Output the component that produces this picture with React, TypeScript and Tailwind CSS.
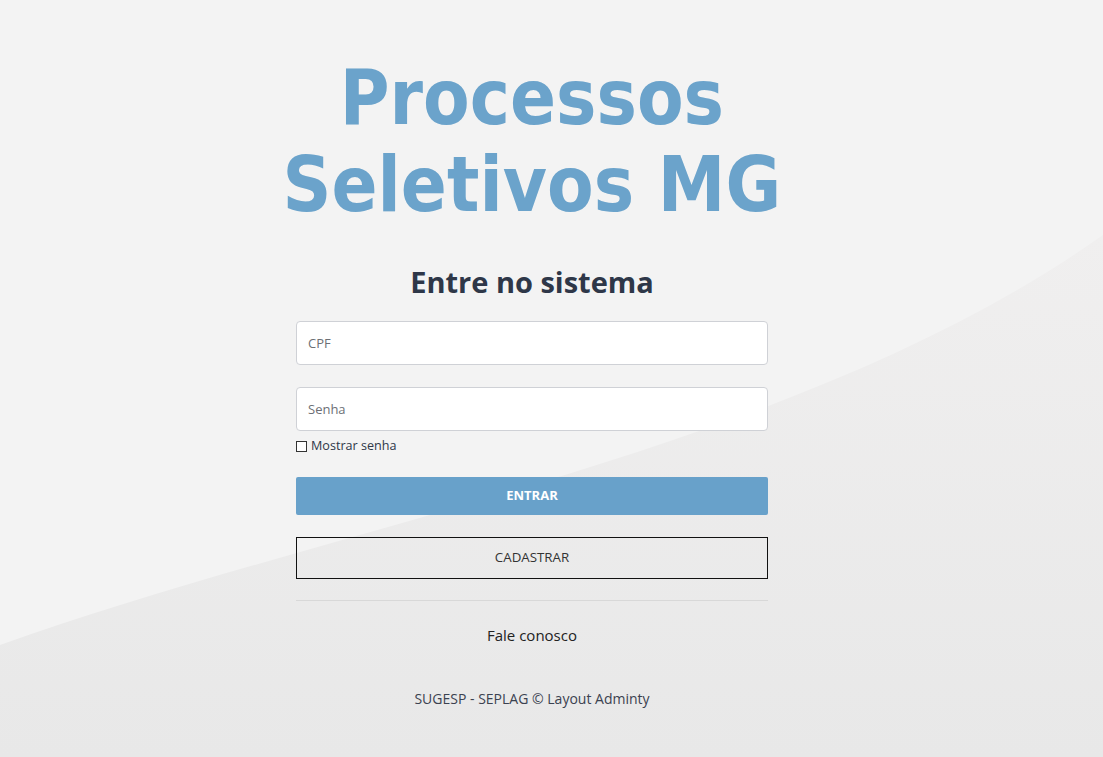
import React from "react";

function Backdrop() {
  return (
    <svg
      className="pointer-events-none absolute inset-0 h-full w-full"
      viewBox="0 0 1103 757"
      preserveAspectRatio="none"
      aria-hidden="true"
    >
      <defs>
        <linearGradient id="lower" x1="0" y1="0" x2="0" y2="1">
          <stop offset="0" stopColor="#f0efef" />
          <stop offset="1" stopColor="#e8e8e8" />
        </linearGradient>
      </defs>
      <path d="M0 645 C 350 520, 800 450, 1103 235 L 1103 757 L 0 757 Z" fill="url(#lower)" />
    </svg>
  );
}

export default function App() {
  return (
    <div className="relative min-h-[757px] overflow-hidden bg-[#f3f3f3] font-['Open_Sans',sans-serif]">
      <Backdrop />

      <div className="relative flex flex-col items-center pr-[39px]">
        <h1 className="mt-[54px] scale-x-[0.894] text-center font-['DejaVu_Sans',sans-serif] text-[76px] font-bold leading-[87px] text-[#6ba3cb]">
          Processos
          <br />
          Seletivos MG
        </h1>

        <h2 className="mt-[35px] text-[29px] font-bold leading-[38px] text-[#2e3748]">
          Entre no sistema
        </h2>

        <form className="mt-[20px] flex w-[472px] flex-col" onSubmit={(e) => e.preventDefault()}>
          <input
            type="text"
            placeholder="CPF"
            className="h-[44px] w-full rounded-[4px] border border-[#cfd1d6] bg-white px-[11px] text-[13px] text-[#333] outline-none placeholder:text-[#6c6f75]"
          />
          <input
            type="password"
            placeholder="Senha"
            className="mt-[22px] h-[44px] w-full rounded-[4px] border border-[#cfd1d6] bg-white px-[11px] text-[13px] text-[#333] outline-none placeholder:text-[#6c6f75]"
          />

          <label className="mt-[6px] flex items-center gap-[4px] text-[12.6px] leading-[18px] text-[#2e3748]">
            <span className="h-[11px] w-[11px] border border-[#333] bg-white" />
            Mostrar senha
          </label>

          <button
            type="submit"
            className="mt-[22px] h-[38px] w-full rounded-[2px] bg-[#68a1ca] text-[13px] font-bold text-white"
          >
            ENTRAR
          </button>

          <button
            type="button"
            className="mt-[22px] h-[42px] w-full border border-[#111] text-[13.3px] text-[#333]"
          >
            CADASTRAR
          </button>

          <div className="mt-[21px] h-px w-full bg-[#d8d8d8]" />

          <p className="mt-[23px] text-center text-[15px] leading-[22px] text-[#222]">Fale conosco</p>

          <p className="mt-[43px] text-center text-[14px] leading-[20px] text-[#3b4250]">
            SUGESP - SEPLAG © Layout Adminty
          </p>
        </form>
      </div>
    </div>
  );
}
